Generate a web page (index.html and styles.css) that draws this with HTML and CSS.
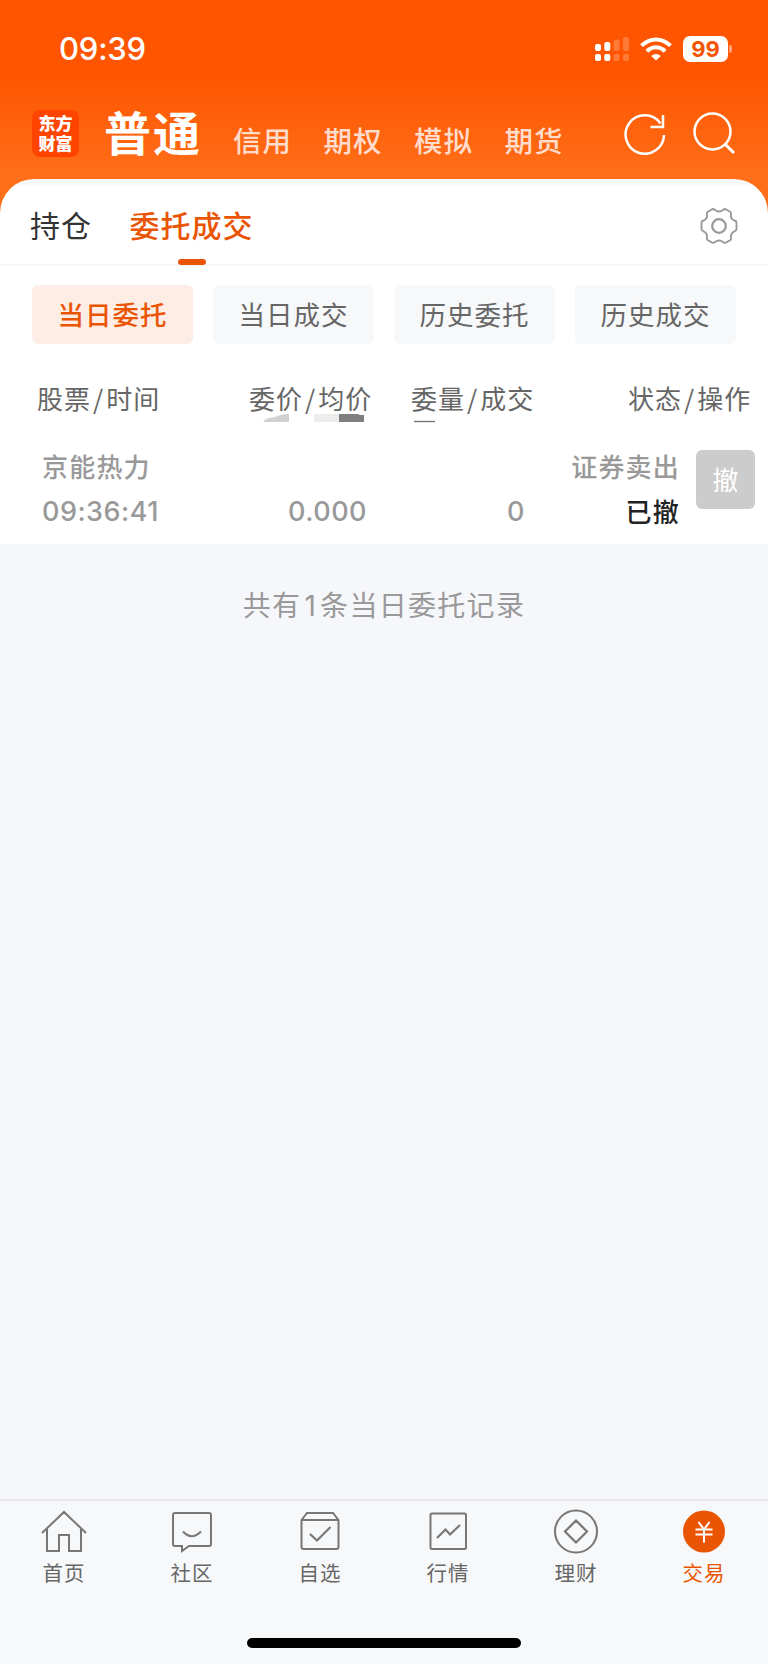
FILE: index.html
```html
<!DOCTYPE html>
<html lang="zh-CN">
<head>
<meta charset="utf-8">
<title>委托成交</title>
<link rel="stylesheet" href="styles.css">
</head>
<body>
<div class="app">
  <header class="top">
    <div class="status">
      <span class="clock">09:39</span>
      <span class="status-icons">
        <svg class="signal" width="35" height="26" viewBox="0 0 35 26" fill="#fff">
          <rect x="0" y="8" width="6" height="7" rx="2"/><rect x="9.3" y="6" width="6" height="9" rx="2"/>
          <rect x="0" y="18" width="6" height="7" rx="2"/><rect x="9.3" y="18" width="6" height="7" rx="2"/>
          <g opacity=".22"><rect x="18.6" y="3.5" width="6" height="11.5" rx="2"/><rect x="28" y="1" width="6" height="14" rx="2"/><rect x="18.6" y="18" width="6" height="7" rx="2"/><rect x="28" y="18" width="6" height="7" rx="2"/></g>
        </svg>
        <svg class="wifi" width="32" height="24" viewBox="0 0 32 24" fill="none" stroke="#fff" stroke-width="4">
          <path d="M1.5 8.6Q8 2.4 16 2.4T30.500 8.600"/><path d="M6.800 14.200Q11 10.200 16 10.200T25.200 14.200"/><path d="M11.200 19Q16 14.800 20.800 19L16 23.600Z" fill="#fff" stroke="none"/>
        </svg>
        <span class="battery">99</span><span class="battery-tip"></span>
      </span>
    </div>
    <nav class="accounts">
      <span class="logo">东方<br>财富</span>
      <span class="account account-on">普通</span>
      <span class="account">信用</span>
      <span class="account">期权</span>
      <span class="account">模拟</span>
      <span class="account">期货</span>
      <svg class="refresh" width="44" height="44" viewBox="0 0 44 44" fill="none" stroke="#fff" stroke-width="2.5">
        <path d="M41 24A19.200 19.200 0 1 1 37.500 12.500"/><path d="M40 4V16H27.500"/>
      </svg>
      <svg class="search" width="44" height="44" viewBox="0 0 44 44" fill="none" stroke="#fff" stroke-width="2.500">
        <circle cx="20.500" cy="20.500" r="18"/><path d="M33 33L42 42" stroke-width="3"/>
      </svg>
    </nav>
  </header>

  <main class="sheet">
    <nav class="tabs">
      <span class="tab">持仓</span>
      <span class="tab tab-on">委托成交</span>
      <svg class="gear" width="38" height="38" viewBox="0 0 38 38" fill="none" stroke="#999" stroke-width="1.900" stroke-linejoin="round">
        <path d="M12.500 2Q14 2 15 3Q19 6 23 3Q24 2 25.500 2L30.500 5Q31.300 6 31 7.500Q30.300 12 34.500 13.500Q36.500 14 36.500 15.500V22.500Q36 24 34.500 24.300Q30.500 26 31 30.500Q31.500 32 30.500 33L25.500 35.800Q24 36 23 35Q19 31.800 15 35Q14 36 12.500 35.800L7.500 33Q6.500 32 7 30.500Q7.500 26 3.500 24.300Q2 24 1.500 22.500V15.500Q1.500 14 3.500 13.500Q7.700 12 7 7.500Q6.700 6 7.500 5Z"/>
        <circle cx="19" cy="19" r="6.800" stroke-width="2.300"/>
      </svg>
    </nav>
    <div class="chips">
      <span class="chip chip-on">当日委托</span>
      <span class="chip">当日成交</span>
      <span class="chip">历史委托</span>
      <span class="chip">历史成交</span>
    </div>
    <div class="thead">
      <span>股票<i>/</i>时间</span>
      <span>委价<i>/</i>均价</span>
      <span>委量<i>/</i>成交</span>
      <span>状态<i>/</i>操作</span>
      <svg class="mask" width="180" height="10" viewBox="0 0 180 10">
        <path d="M0 8Q2 4 12 3Q18 0 26 0V8Z" fill="#d0d0d0"/>
        <path d="M51 0H76V8H51Z" fill="#ececec"/>
        <path d="M76 0H95L97 1H101V8H76Z" fill="#7f7f7f"/>
        <path d="M151 7.500H172" stroke="#777" stroke-width="1.400"/>
      </svg>
    </div>
    <div class="order">
      <div class="cell stock"><span>京能热力</span><span class="num">09:36:41</span></div>
      <div class="cell price"><span></span><span class="num">0.000</span></div>
      <div class="cell amount"><span></span><span class="num">0</span></div>
      <div class="cell state"><span>证券卖出</span><span class="done">已撤</span></div>
      <button class="cancel">撤</button>
    </div>
  </main>

  <p class="summary">共有<span class="one">1</span>条当日委托记录</p>

  <footer class="bottom">
    <nav class="tabbar">
      <div class="item">
        <svg width="48" height="48" viewBox="0 0 48 48"><path d="M2 25L24 4L46 25M7 21V43H19V27H29V43H41V21"/></svg>
        <span>首页</span>
      </div>
      <div class="item">
        <svg width="48" height="48" viewBox="0 0 48 48"><path d="M7 5H41Q43 5 43 7V36Q43 38 41 38H21L14 43V38H7Q5 38 5 36V7Q5 5 7 5Z"/><path d="M15 23.500Q23.500 33 33 23.500" stroke-width="2.200"/></svg>
        <span>社区</span>
      </div>
      <div class="item">
        <svg width="48" height="48" viewBox="0 0 48 48"><path d="M5.500 12L11 5H37L42.500 12V39Q42.500 41 40.500 41H7.500Q5.500 41 5.500 39ZM5.500 12H42.500"/><path d="M14 26L21 32.500L34.500 19" stroke-width="2.200"/></svg>
        <span>自选</span>
      </div>
      <div class="item">
        <svg width="48" height="48" viewBox="0 0 48 48"><rect x="6.500" y="5.500" width="35.500" height="35.500" rx="1.500"/><path d="M13 30L21.500 21.500L26 26.500L36 17" stroke-width="2.200"/></svg>
        <span>行情</span>
      </div>
      <div class="item">
        <svg width="48" height="48" viewBox="0 0 48 48"><circle cx="24" cy="23.500" r="21"/><path d="M24 12.500L35 23.500L24 34.500L13 23.500Z" stroke-width="2.200"/></svg>
        <span>理财</span>
      </div>
      <div class="item item-on">
        <svg width="48" height="48" viewBox="0 0 48 48"><circle cx="24" cy="23.500" r="21" fill="#ea5504" stroke="none"/><path d="M18.500 14L24 21.500L29.500 14M24 21.500V34.500M15.500 21.500H32.500M15.500 26.500H32.500" stroke="#fff"/></svg>
        <span>交易</span>
      </div>
    </nav>
    <div class="home-bar"></div>
  </footer>
</div>
</body>
</html>
```
FILE: styles.css
```css
* { box-sizing: border-box; }
body {
  margin: 0;
  font-family: "Noto Sans CJK SC", sans-serif;
  color: #666;
  background: #f7f8fa;
}
.app {
  width: 768px;
  height: 1664px;
  display: flex;
  flex-direction: column;
  background: linear-gradient(#ff5500 75px, #ff6e18 175px, #ff6e18 230px, #f6f7fa 230px);
}
.top { height: 179px; flex: none; color: #fff; }
.status {
  height: 96px;
  padding: 0 36px 0 59px;
  display: flex;
  justify-content: space-between;
  align-items: center;
}
.clock { margin-top: 2px; font: 500 31px/40px Inter, sans-serif; letter-spacing: -.2px; }
.status-icons { display: flex; align-items: center; margin-top: 1px; }
.signal { margin-right: 10px; }
.wifi { margin-right: 11px; }
.battery {
  width: 45px;
  height: 26px;
  border-radius: 7px;
  background: #fff;
  color: #f45400;
  font: 700 22px/26px Inter, sans-serif;
  text-align: center;
}
.battery-tip {
  width: 3px;
  height: 8px;
  margin-left: 1px;
  border-radius: 0 3px 3px 0;
  background: rgba(255, 255, 255, .45);
}
.accounts { height: 83px; padding-left: 32px; display: flex; align-items: flex-start; }
.logo {
  width: 47px;
  height: 47px;
  margin-top: 14px;
  margin-right: 25px;
  padding-top: 3px;
  border-radius: 8px;
  background: #ff4400;
  text-align: center;
  font-size: 17px;
  font-weight: 900;
  line-height: 19.500px;
}
.account {
  margin-top: 24px;
  width: 90.500px;
  font-size: 28.500px;
  line-height: 40px;
  font-weight: 500;
  letter-spacing: 1px;
  color: #ffdccb;
}
.account-on {
  width: 129px;
  margin-top: 5px;
  font-size: 47px;
  line-height: 60px;
  font-weight: 700;
  letter-spacing: 2px;
  color: #fff;
}
.refresh { margin-top: 15px; margin-left: 28px; }
.search { margin-top: 15px; margin-left: 25px; }
.sheet {
  height: 365px;
  flex: none;
  border-radius: 34px 34px 0 0;
  background: linear-gradient(#f7f8fa 5px, #fff 8px);
}
.tabs {
  height: 87px;
  padding: 0 30px 0 30px;
  display: flex;
  align-items: center;
  border-bottom: 2px solid #f7f7f8;
}
.tab {
  height: 86px;
  line-height: 90px;
  font-size: 30px;
  letter-spacing: 1px;
  color: #333;
  margin-right: 37.500px;
}
.tab-on {
  font-weight: 500;
  color: #ea5504;
  display: flex;
  flex-direction: column;
  align-items: center;
}
.tab-on::after {
  content: "";
  width: 28px;
  height: 6px;
  margin-top: -10px;
  border-radius: 3px;
  background: #ea5504;
}
.gear { margin: 9px 0 0 auto; }
.chips {
  padding: 19px 32px 0;
  display: grid;
  grid-template-columns: repeat(4, 1fr);
  gap: 20px;
}
.chip {
  height: 59px;
  border-radius: 6px;
  background: #f7f8fa;
  text-align: center;
  font-size: 26.500px;
  letter-spacing: 1px;
  line-height: 58px;
}
.chip-on { background: #fdede5; color: #ea5504; font-weight: 500; }
.thead {
  height: 78px;
  padding: 34px 0 0 37px;
  display: grid;
  grid-template-columns: 212px 162px 217px 130px;
  font-size: 26px;
  letter-spacing: 1px;
  line-height: 40px;
  white-space: nowrap;
  position: relative;
}
.thead i { font-style: normal; margin: 0 2px; }
.mask { position: absolute; left: 263px; top: 70px; }
.order {
  height: 122px;
  padding: 22px 13px 0 42px;
  display: flex;
}
.cell {
  display: flex;
  flex-direction: column;
  font-size: 26px;
  letter-spacing: 1.200px;
  font-weight: 500;
  line-height: 43px;
  color: #999;
}
.cell span { height: 45px; }
.cell .num {
  font-family: Inter, sans-serif;
  font-size: 27px;
  letter-spacing: .5px;
  line-height: 45px;
}
.stock { width: 150px; }
.price { width: 175px; text-align: right; }
.amount { width: 158px; text-align: right; }
.state { width: 155px; text-align: right; }
.cell .done { color: #222; }
.cancel {
  width: 59px;
  height: 59px;
  margin: 6px 0 0 auto;
  padding: 0 0 2px;
  border: 0;
  border-radius: 6px;
  background: #ccc;
  color: #fff;
  font: 26px/56px "Noto Sans CJK SC", sans-serif;
}
.summary {
  margin: 0;
  padding-top: 40px;
  flex: 1;
  background: #f6f7fa;
  text-align: center;
  font-size: 28px;
  letter-spacing: 1.300px;
  line-height: 40px;
  color: #999;
}
.one { font-family: Inter, sans-serif; margin: 0 3px; }
.bottom {
  height: 165px;
  background: #f7f8fa;
  border-top: 2px solid #e9e9ee;
}
.tabbar { display: flex; padding-top: 7px; height: 137px; }
.item {
  width: 128px;
  display: flex;
  flex-direction: column;
  align-items: center;
  font-size: 20.500px;
  letter-spacing: 1px;
  line-height: 33px;
}
.item svg { fill: none; stroke: #777; stroke-width: 2; }
.item-on { color: #ea5504; }
.home-bar {
  width: 274px;
  height: 10px;
  margin: 0 auto;
  border-radius: 5px;
  background: #000;
}
```
